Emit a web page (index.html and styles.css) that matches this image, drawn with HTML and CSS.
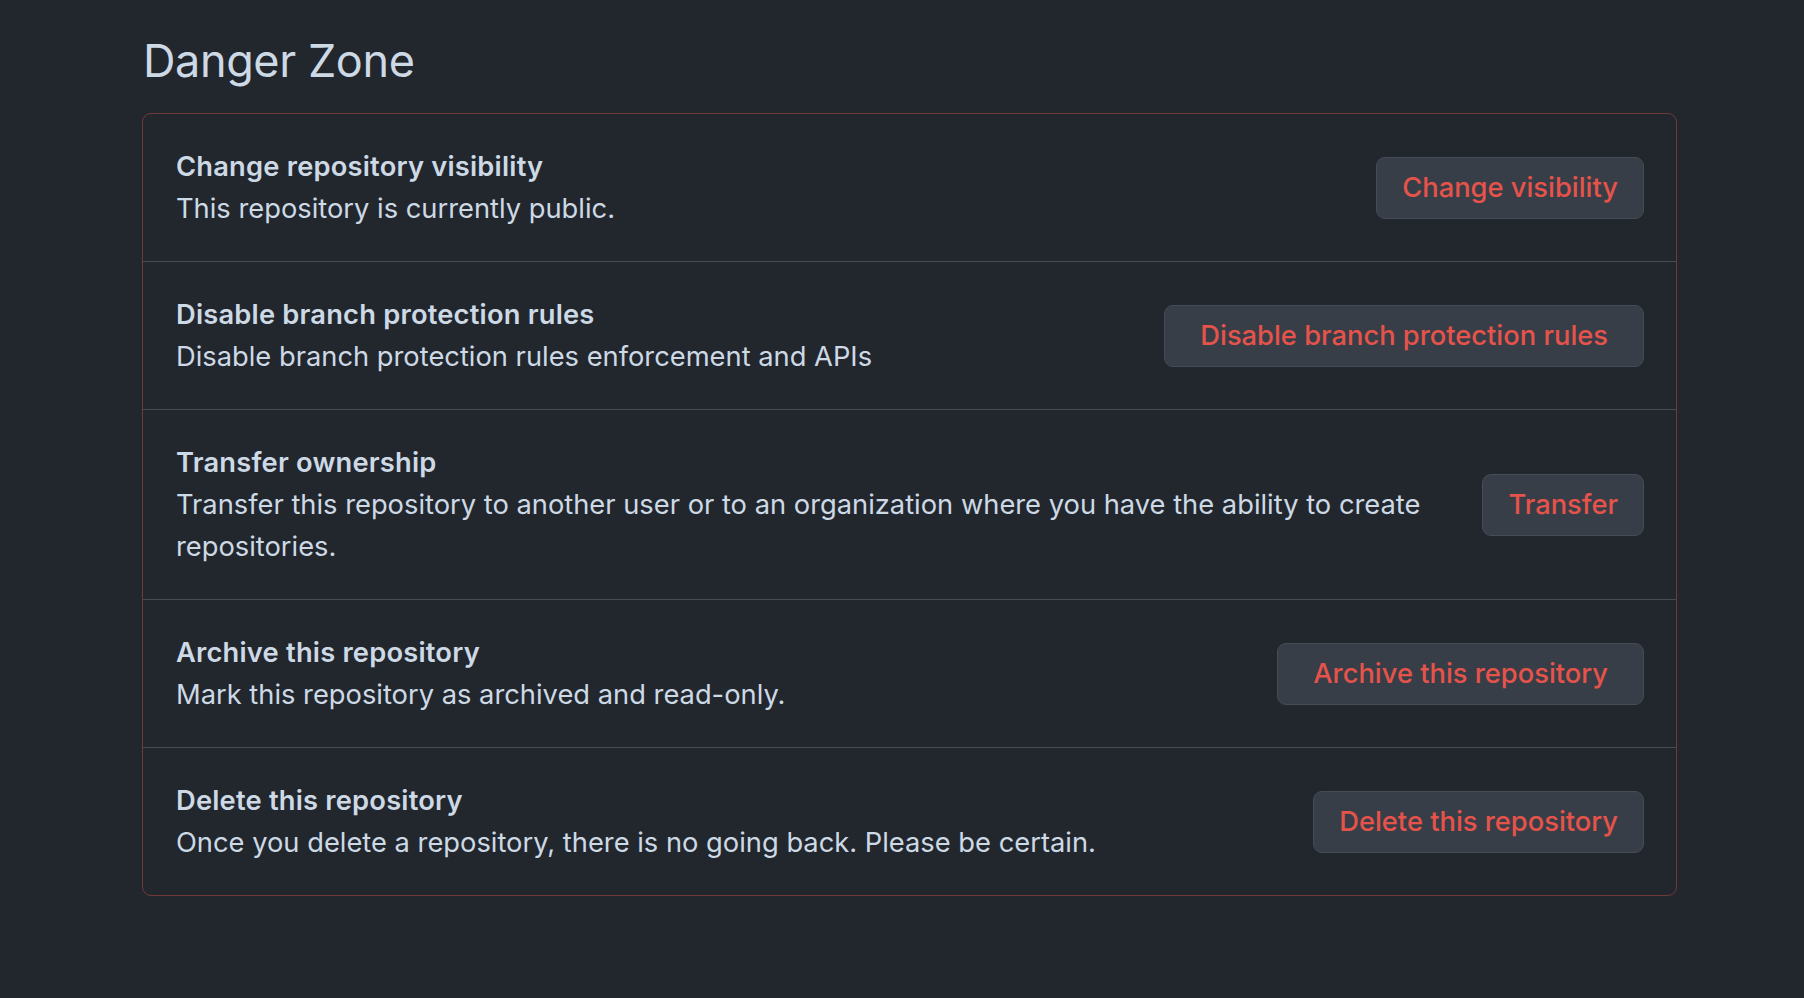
FILE: index.html
```html
<!DOCTYPE html>
<html lang="en">
<head>
<meta charset="utf-8">
<title>Danger Zone</title>
<link rel="stylesheet" href="styles.css">
</head>
<body>
<main class="page">
  <h2 class="heading">Danger Zone</h2>
  <div class="danger-box">
    <div class="row">
      <div class="info">
        <div class="title">Change repository visibility</div>
        <div class="desc">This repository is currently public.</div>
      </div>
      <button class="btn">Change visibility</button>
    </div>
    <div class="row">
      <div class="info">
        <div class="title">Disable branch protection rules</div>
        <div class="desc">Disable branch protection rules enforcement and APIs</div>
      </div>
      <button class="btn btn-wide">Disable branch protection rules</button>
    </div>
    <div class="row">
      <div class="info">
        <div class="title">Transfer ownership</div>
        <div class="desc">Transfer this repository to another user or to an organization where you have the ability to create repositories.</div>
      </div>
      <button class="btn">Transfer</button>
    </div>
    <div class="row">
      <div class="info">
        <div class="title">Archive this repository</div>
        <div class="desc">Mark this repository as archived and read-only.</div>
      </div>
      <button class="btn btn-wide">Archive this repository</button>
    </div>
    <div class="row">
      <div class="info">
        <div class="title">Delete this repository</div>
        <div class="desc">Once you delete a repository, there is no going back. Please be certain.</div>
      </div>
      <button class="btn">Delete this repository</button>
    </div>
  </div>
</main>
</body>
</html>
```
FILE: styles.css
```css
html, body {
  margin: 0;
  padding: 0;
  background: #22272e;
}
body {
  font-family: Inter, "Noto Sans", sans-serif;
  color: #cdd9e5;
  height: 998px;
}
.page {
  padding: 31px 127px 0 142px;
}
.heading {
  margin: 0 0 22px 1px;
  font-size: 45px;
  font-weight: 400;
  line-height: 60px;
  color: #cdd9e5;
  letter-spacing: -0.4px;
}
.danger-box {
  border: 1px solid #70393a;
  border-radius: 9px;
}
.row {
  display: flex;
  align-items: center;
  justify-content: space-between;
  padding: 31.5px 32px 31.5px 33px;
  border-top: 1px solid #444c56;
}
.row:first-child {
  border-top: none;
}
.info {
  flex: 1;
  margin-right: 50px;
  font-size: 27.3px;
  line-height: 42px;
}
.title {
  font-weight: 600;
  letter-spacing: 0.2px;
  color: #cdd9e5;
}
.desc {
  color: #cdd9e5;
}
.btn {
  flex: none;
  font-family: inherit;
  font-size: 27.3px;
  font-weight: 500;
  line-height: 38px;
  padding: 11px 25px;
  color: #e5534b;
  background: #373e47;
  border: 1px solid #444c56;
  border-radius: 9px;
}
.btn-wide {
  padding-left: 35px;
  padding-right: 35px;
}
```
